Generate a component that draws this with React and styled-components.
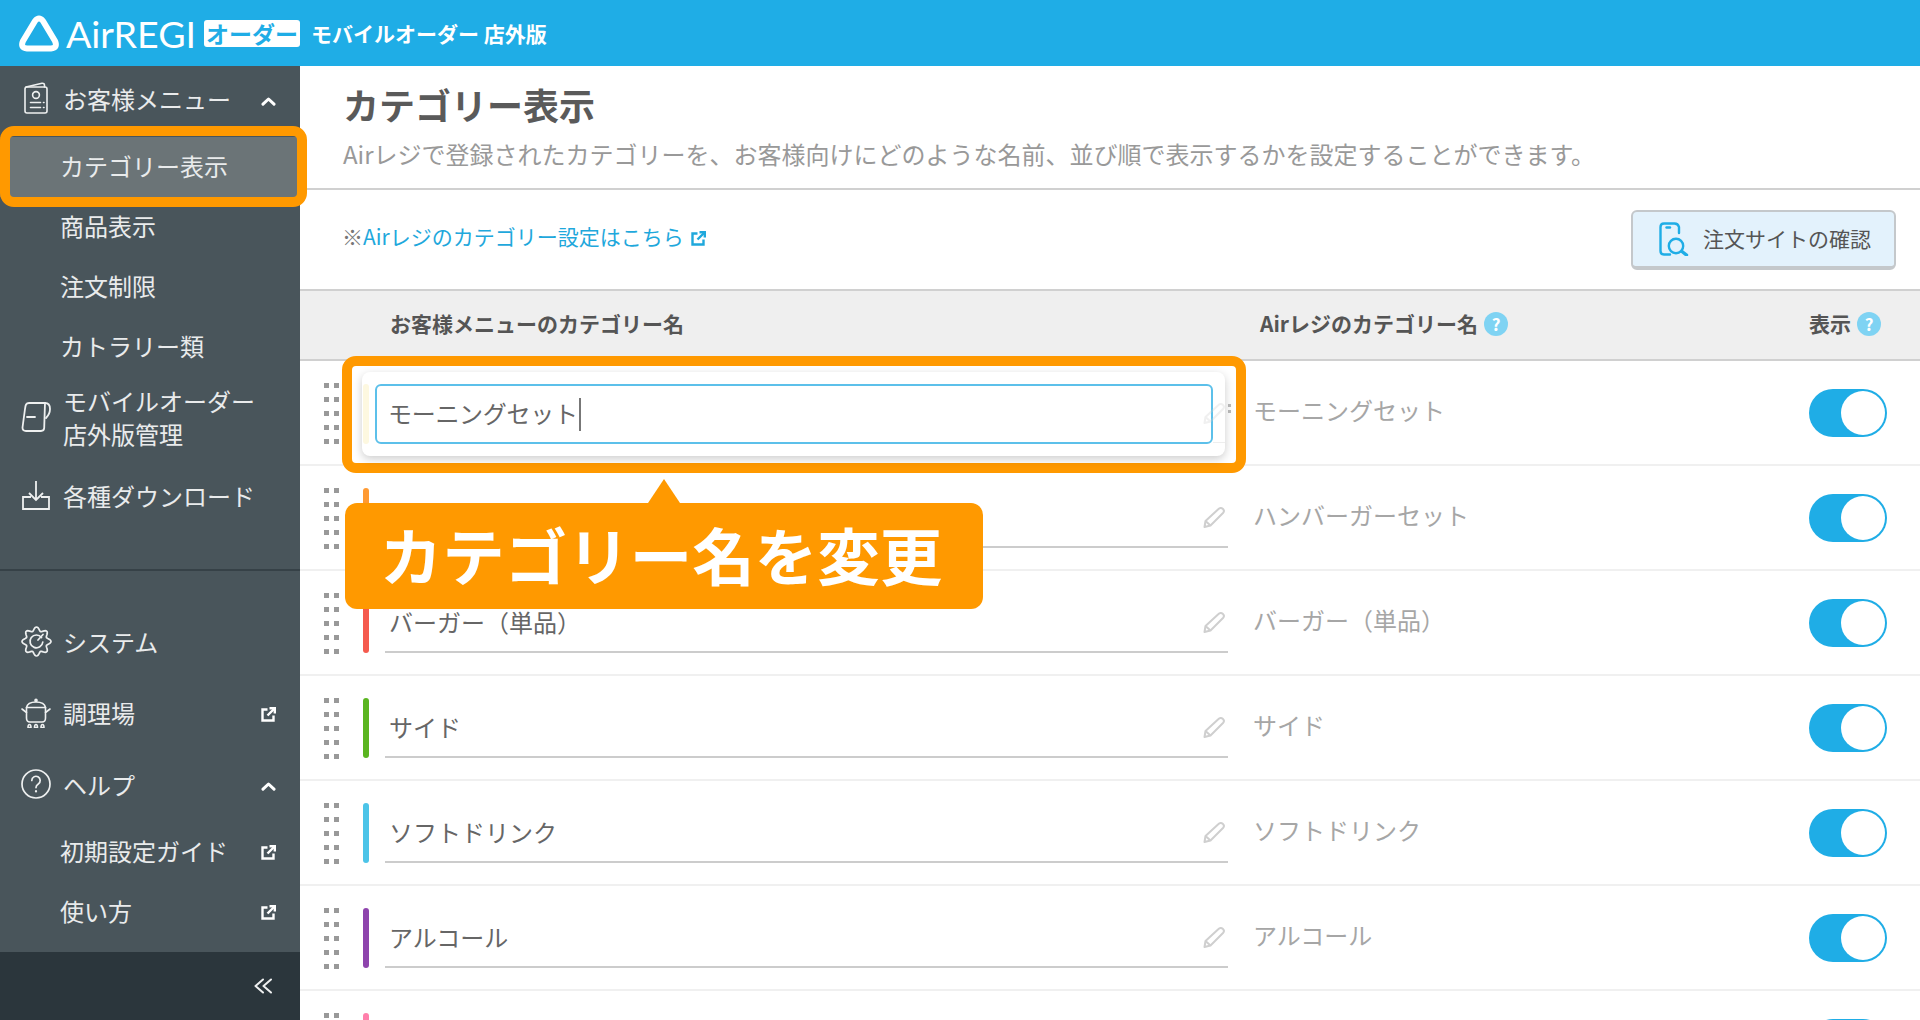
import React from 'react'
import styled, { createGlobalStyle } from 'styled-components'

const GlobalStyle = createGlobalStyle`
  html, body {
    margin: 0;
    padding: 0;
    background: #fff;
    font-family: "Noto Sans CJK JP", "Noto Sans", sans-serif;
  }
  * { box-sizing: border-box; }
`

const categories = [
  { id: 1, name: '', airName: 'モーニングセット', color: '#f8e65a' },
  { id: 2, name: '', airName: 'ハンバーガーセット', color: '#ff9a33' },
  { id: 3, name: 'バーガー（単品）', airName: 'バーガー（単品）', color: '#f55a4e' },
  { id: 4, name: 'サイド', airName: 'サイド', color: '#5ab520' },
  { id: 5, name: 'ソフトドリンク', airName: 'ソフトドリンク', color: '#4cc4e8' },
  { id: 6, name: 'アルコール', airName: 'アルコール', color: '#8e44ad' },
  { id: 7, name: '', airName: '', color: '#ff80ab' },
]

// 8 lobes, sampled round the circle
const gearPath = (() => {
  const pts = []
  for (let i = 0; i < 120; i++) {
    const a = (i / 120) * Math.PI * 2
    const r = 12.6 + 1.9 * Math.cos(a * 8)
    pts.push(`${(15.5 + r * Math.sin(a)).toFixed(2)} ${(15.5 - r * Math.cos(a)).toFixed(2)}`)
  }
  return 'M' + pts.join('L') + 'Z'
})()

const MenuIcon = () => (
  <svg width="24" height="32" viewBox="0 0 24 32" fill="none" stroke="#eef0f0" strokeWidth="1.6" strokeLinecap="round" strokeLinejoin="round">
    <path d="M2 5 18 1.2Q20.5 1 20.5 3.5V5" />
    <rect x="1" y="5" width="22" height="26" rx="2" />
    <circle cx="12" cy="13" r="3.4" />
    <path d="M6.5 20.5h10M6.5 25.5h10M19.5 20.5h.5M19.5 25.5h.5" />
  </svg>
)

const ScrollIcon = () => (
  <svg width="30" height="32" viewBox="0 0 30 32" fill="none" stroke="#eef0f0" strokeWidth="1.8" strokeLinecap="round" strokeLinejoin="round">
    <path d="M8 2C5 2 4.5 4 4 8L1.5 26.5Q1.5 30 5 30H20Q23 30 23.2 27L24 2H8" />
    <path d="M24 2Q29 2 29 8 29 13 25 17" />
    <path d="M6 16H14" />
  </svg>
)

const DownloadIcon = () => (
  <svg width="28" height="30" viewBox="0 0 28 30" fill="none" stroke="#eef0f0" strokeWidth="1.8">
    <path d="M14 1V20M7 13 14 20 21 13" />
    <path d="M9 17H1V29H27V17H19" />
  </svg>
)

const GearIcon = () => (
  <svg width="31" height="31" viewBox="0 0 31 31" fill="none" stroke="#eef0f0" strokeWidth="1.7" strokeLinecap="round">
    <path d={gearPath} />
    <path d="M20.5 11.5A6.4 6.4 0 1 0 21.8 16" />
    <path d="M17 14 22 8.5" />
  </svg>
)

const PotIcon = () => (
  <svg width="30" height="30" viewBox="0 0 30 30" fill="none" stroke="#eef0f0" strokeWidth="1.6" strokeLinecap="round" strokeLinejoin="round">
    <circle cx="15" cy="2.4" r="1" />
    <path d="M5.5 9.5Q6.5 4 15 4T24.5 9.5Z" />
    <path d="M1 11 5.5 14.5V20Q5.5 24 9 24H21Q24.5 24 24.5 20V14.5L29 11" />
    <path d="M5.5 9.5V14.5M24.5 9.5V14.5" />
    <path d="M7 29.5Q7 26.5 8.5 26.5T10 29.5ZM13.5 29.5Q13.5 26.5 15 26.5T16.5 29.5ZM20 29.5Q20 26.5 21.5 26.5T23 29.5Z" />
  </svg>
)

const HelpIcon = () => (
  <svg width="30" height="30" viewBox="0 0 30 30" fill="none" stroke="#eef0f0" strokeWidth="1.7" strokeLinecap="round">
    <circle cx="15" cy="15" r="14" />
    <path d="M10.8 11.5A4.2 4.2 0 1 1 17.3 15C15.8 16 15 16.8 15 18.6" />
    <path d="M15 22.2v.2" strokeWidth="2.2" />
  </svg>
)

const ChevronUp = () => (
  <svg width="15" height="9" viewBox="0 0 15 9" fill="none" stroke="#fff" strokeWidth="3" strokeLinecap="round" strokeLinejoin="round">
    <path d="M2 7.2 7.5 2 13 7.2" />
  </svg>
)

const ExternalIcon = ({ color = '#fff' }) => (
  <svg width="15" height="15" viewBox="0 0 15 15" fill="none" stroke={color} strokeWidth="2.4">
    <path d="M6.5 2.5H1.5V13.5H12.5V8.5" />
    <path d="M6.5 8.5 13 2" />
    <path d="M8.5 1.2H13.8V6.5" />
  </svg>
)

const DoubleChevron = () => (
  <svg width="18" height="16" viewBox="0 0 18 16" fill="none" stroke="#eef0f0" strokeWidth="2" strokeLinecap="round" strokeLinejoin="round">
    <path d="M9 1.5 1.5 8 9 14.5M17 1.5 9.5 8 17 14.5" />
  </svg>
)

const PhoneSearchIcon = () => (
  <svg width="30" height="34" viewBox="0 0 30 34" fill="none" stroke="#1fade6" strokeWidth="2.4" strokeLinecap="round">
    <path d="M11 32.5H5Q1.5 32.5 1.5 29V5Q1.5 1.5 5 1.5H15.5Q19 1.5 20 5V11" />
    <path d="M7.5 5.5h3.5" />
    <circle cx="17" cy="24" r="7.2" />
    <path d="M23 29.5 27.5 33" strokeWidth="3.4" />
  </svg>
)

const PencilIcon = () => (
  <svg width="22" height="22" viewBox="0 0 22 22" fill="none" stroke="#cfcfcf" strokeWidth="2" strokeLinejoin="round">
    <path d="M2.5 15 15.5 3a3 3 0 0 1 4.5 4L7.5 19.5 1.5 21Z" />
    <path d="M2.5 15 7.5 19.5" />
  </svg>
)

const LogoMark = () => (
  <svg width="42" height="37" viewBox="0 0 42 37" fill="none" stroke="#fff" strokeWidth="6" strokeLinejoin="round">
    <path d="M17 6Q21 1 25 6L37 26Q40 33 33 33.5H9Q2 33 5 26Z" />
  </svg>
)

const App = () => {
  return (
    <Page>
      <GlobalStyle />
      <Header>
        <LogoMark />
        <LogoText>AirREGI</LogoText>
        <LogoBadge>オーダー</LogoBadge>
        <ProductName>モバイルオーダー 店外版</ProductName>
      </Header>

      <Body>
        <Sidebar>
          <MenuTop>
            <Item $h={68}>
              <IconBox><MenuIcon /></IconBox>
              <ItemLabel>お客様メニュー</ItemLabel>
              <ItemEnd $nudge={2}><ChevronUp /></ItemEnd>
            </Item>
            <SubList>
              <SubItem $active><SubLabel>カテゴリー表示</SubLabel></SubItem>
              <SubItem><SubLabel>商品表示</SubLabel></SubItem>
              <SubItem><SubLabel>注文制限</SubLabel></SubItem>
              <SubItem><SubLabel>カトラリー類</SubLabel></SubItem>
            </SubList>
            <Item $h={83}>
              <IconBox><ScrollIcon /></IconBox>
              <ItemLabel>モバイルオーダー<br />店外版管理</ItemLabel>
            </Item>
            <Item $h={74}>
              <IconBox><DownloadIcon /></IconBox>
              <ItemLabel>各種ダウンロード</ItemLabel>
            </Item>
          </MenuTop>
          <MenuBottom>
            <Item $h={71}>
              <IconBox><GearIcon /></IconBox>
              <ItemLabel>システム</ItemLabel>
            </Item>
            <Item $h={71}>
              <IconBox><PotIcon /></IconBox>
              <ItemLabel>調理場</ItemLabel>
              <ItemEnd><ExternalIcon /></ItemEnd>
            </Item>
            <Item $h={72}>
              <IconBox><HelpIcon /></IconBox>
              <ItemLabel>ヘルプ</ItemLabel>
              <ItemEnd><ChevronUp /></ItemEnd>
            </Item>
            <SubItem><SubLabel>初期設定ガイド</SubLabel><ItemEnd><ExternalIcon /></ItemEnd></SubItem>
            <SubItem><SubLabel>使い方</SubLabel><ItemEnd><ExternalIcon /></ItemEnd></SubItem>
          </MenuBottom>
          <Collapse><DoubleChevron /></Collapse>
        </Sidebar>

        <Main>
          <TitleBlock>
            <Title>カテゴリー表示</Title>
            <Description>Airレジで登録されたカテゴリーを、お客様向けにどのような名前、並び順で表示するかを設定することができます。</Description>
          </TitleBlock>

          <Toolbar>
            <SettingLink>
              <LinkLabel><Mark>※</Mark>Airレジのカテゴリー設定はこちら</LinkLabel>
              <ExternalIcon color="#1fa8dc" />
            </SettingLink>
            <ConfirmButton>
              <PhoneSearchIcon />
              <ButtonLabel>注文サイトの確認</ButtonLabel>
            </ConfirmButton>
          </Toolbar>

          <TableHead>
            <HeadName>お客様メニューのカテゴリー名</HeadName>
            <HeadAir><HeadLabel>Airレジのカテゴリー名</HeadLabel><HelpDot>?</HelpDot></HeadAir>
            <HeadShow><HeadLabel>表示</HeadLabel><HelpDot>?</HelpDot></HeadShow>
          </TableHead>

          {categories.map((c) => (
            <Row key={c.id}>
              <Grip>{Array.from({ length: 10 }, (_, i) => <GripDot key={i} />)}</Grip>
              <ColorBar $color={c.color} />
              <NameField>
                <NameText>{c.name}</NameText>
                <PencilIcon />
              </NameField>
              <AirName>{c.airName}</AirName>
              <Toggle />
            </Row>
          ))}
        </Main>
      </Body>

      <SideRing />
      <FocusRing>
        <StrayDots />
        <FocusCard>
          <FadedBar />
          <InputBox>モーニングセット<Caret /></InputBox>
          <FadedPencil><PencilIcon /></FadedPencil>
          <FadedLine />
        </FocusCard>
      </FocusRing>
      <Callout>カテゴリー名を変更</Callout>
    </Page>
  )
}

export default App

const Page = styled.div`
  position: relative;
  width: 1920px;
  height: 1020px;
  overflow: hidden;
  display: flex;
  flex-direction: column;
`

const Header = styled.header`
  height: 66px;
  flex: none;
  background: #1fade6;
  display: flex;
  align-items: center;
  padding-left: 18px;
  color: #fff;
`

const LogoText = styled.span`
  font-family: "Lato", sans-serif;
  font-size: 37.5px;
  font-weight: 400;
  margin-left: 6px;
  width: 132px;
`

const LogoBadge = styled.span`
  width: 96px;
  height: 27px;
  margin-left: 6px;
  border-radius: 3px;
  background: #fff;
  color: #1fade6;
  font-size: 23px;
  font-weight: 700;
  line-height: 26px;
  text-align: center;
`

const ProductName = styled.span`
  margin-left: 11px;
  font-size: 21px;
  font-weight: 700;
`

const Body = styled.div`
  flex: 1;
  display: flex;
  min-height: 0;
`

const Sidebar = styled.aside`
  width: 300px;
  flex: none;
  background: #49555b;
  color: #e9ebec;
  display: flex;
  flex-direction: column;
`

const MenuTop = styled.nav`
  height: 505px;
  border-bottom: 2px solid #364147;
`

const MenuBottom = styled.nav`
  flex: 1;
  padding-top: 37px;
`

const Item = styled.div`
  height: ${(p) => p.$h}px;
  display: flex;
  align-items: center;
  padding-right: 24px;
  font-size: 24px;
`

const IconBox = styled.span`
  width: 36px;
  margin: 0 9px 4px 18px;
  display: flex;
  justify-content: center;
  flex: none;
`

const ItemLabel = styled.span`
  line-height: 33px;
  padding-bottom: 4px;
`

const ItemEnd = styled.span`
  margin-left: auto;
  margin-top: ${(p) => p.$nudge || 0}px;
  display: flex;
`

const SubList = styled.div`
  margin-top: 3px;
`

const SubItem = styled.div`
  height: 60px;
  display: flex;
  align-items: center;
  padding: 0 24px 0 60px;
  font-size: 24px;
  background: ${(p) => (p.$active ? '#6b7477' : 'transparent')};
`

const SubLabel = styled.span`
  padding-bottom: 4px;
`

const Collapse = styled.div`
  height: 68px;
  flex: none;
  background: #2b363c;
  display: flex;
  align-items: center;
  justify-content: flex-end;
  padding-right: 28px;
`

const Main = styled.main`
  flex: 1;
  min-width: 0;
  overflow: hidden;
`

const TitleBlock = styled.section`
  height: 124px;
  padding: 14px 0 0 43px;
  border-bottom: 2px solid #d0d0d0;
`

const Title = styled.h1`
  margin: 0;
  font-size: 36px;
  line-height: 48px;
  font-weight: 700;
  color: #5a5a5a;
`

const Description = styled.p`
  margin: 10px 0 0;
  font-size: 24px;
  line-height: 32px;
  color: #999;
`

const Toolbar = styled.div`
  height: 99px;
  display: flex;
  align-items: center;
  justify-content: space-between;
  padding: 0 24px 0 42px;
`

const SettingLink = styled.a`
  display: flex;
  align-items: center;
  gap: 7px;
  font-size: 21px;
  color: #1fa8dc;
  margin-top: -2px;
`

const LinkLabel = styled.span`
  padding-bottom: 5px;
`

const Mark = styled.span`
  color: #777;
`

const ConfirmButton = styled.button`
  width: 265px;
  height: 60px;
  display: flex;
  align-items: center;
  gap: 14px;
  padding: 0 0 0 26px;
  font: inherit;
  font-size: 21px;
  color: #555;
  background: #e3f2fc;
  border: 2px solid #c4c8cb;
  border-bottom-width: 4px;
  border-radius: 6px;
`

const ButtonLabel = styled.span`
  padding-bottom: 2px;
`

const TableHead = styled.div`
  height: 72px;
  padding-bottom: 3px;
  display: flex;
  align-items: center;
  background: #efefef;
  border-top: 2px solid #d0d0d0;
  border-bottom: 2px solid #d0d0d0;
  font-size: 21px;
  font-weight: 700;
  color: #555;
`

const HeadName = styled.span`
  width: 870px;
  margin-left: 90px;
  padding-bottom: 2px;
  flex: none;
`

const HeadLabel = styled.span`
  padding-bottom: 2px;
`

const HeadAir = styled.span`
  display: flex;
  align-items: center;
  gap: 6px;
  flex: 1;
`

const HeadShow = styled.span`
  display: flex;
  align-items: center;
  gap: 6px;
  margin-right: 39px;
`

const HelpDot = styled.span`
  width: 24px;
  height: 24px;
  border-radius: 50%;
  background: #7fd3f3;
  color: #fff;
  font-size: 17px;
  line-height: 24px;
  text-align: center;
`

const Row = styled.div`
  height: 105px;
  flex: none;
  display: flex;
  align-items: center;
  padding-left: 24px;
  border-bottom: 2px solid #f0f0f0;
`

const Grip = styled.div`
  width: 15px;
  margin: 2px 24px 0 0;
  display: grid;
  grid-template-columns: 5px 5px;
  justify-content: space-between;
  row-gap: 9px;
`

const GripDot = styled.i`
  display: block;
  width: 5px;
  height: 5px;
  background: #999;
`

const ColorBar = styled.div`
  width: 6px;
  height: 60px;
  border-radius: 3px;
  background: ${(p) => p.$color};
`

const NameField = styled.div`
  width: 843px;
  height: 60px;
  margin-left: 16px;
  padding: 0 3px 0 4px;
  display: flex;
  align-items: center;
  justify-content: space-between;
  border-bottom: 2px solid #ccc;
`

const NameText = styled.span`
  font-size: 24px;
  color: #666;
`

const AirName = styled.span`
  flex: 1;
  margin-left: 25px;
  padding-bottom: 7px;
  font-size: 24px;
  color: #a6a6a6;
`

const Toggle = styled.div`
  position: relative;
  width: 78px;
  height: 48px;
  margin-right: 33px;
  border-radius: 24px;
  background: #1fade6;

  &::after {
    content: "";
    position: absolute;
    top: 2px;
    right: 2px;
    width: 44px;
    height: 44px;
    border-radius: 50%;
    background: #fff;
  }
`

const SideRing = styled.div`
  position: absolute;
  left: 0;
  top: 126px;
  width: 307px;
  height: 81px;
  border: 10px solid #ff9900;
  border-radius: 14px;
`

const FocusRing = styled.div`
  position: absolute;
  left: 342px;
  top: 356px;
  width: 904px;
  height: 117px;
  border: 10px solid #ff9900;
  border-radius: 14px;
  background: #fff;
`

const StrayDots = styled.div`
  position: absolute;
  left: 876px;
  top: 38px;
  width: 3px;
  height: 9px;
  border-top: 3px solid #bbb;
  border-bottom: 3px solid #bbb;
`

const FocusCard = styled.div`
  position: absolute;
  left: 10px;
  top: 6px;
  width: 863px;
  height: 84px;
  padding-left: 1px;
  display: flex;
  align-items: center;
  gap: 6px;
  background: #fff;
  border-radius: 8px;
  box-shadow: 0 3px 10px rgba(0, 0, 0, 0.2);
`

const FadedBar = styled.div`
  width: 6px;
  height: 60px;
  border-radius: 3px;
  background: #fdf8e0;
`

const InputBox = styled.div`
  width: 838px;
  height: 60px;
  padding: 0 0 4px 11px;
  display: flex;
  align-items: center;
  font-size: 24px;
  letter-spacing: -0.3px;
  color: #666;
  background: #fff;
  border: 2px solid #5cc0ea;
  border-radius: 6px;
`

const Caret = styled.span`
  width: 2px;
  height: 33px;
  margin: 4px 0 0 1px;
  background: #777;
`

const FadedPencil = styled.div`
  position: absolute;
  left: 841px;
  top: 30px;
  opacity: 0.3;
`

const FadedLine = styled.div`
  position: absolute;
  left: 851px;
  right: 0;
  top: 70px;
  height: 1px;
  background: #eee;
`

const Callout = styled.div`
  position: absolute;
  left: 345px;
  top: 503px;
  width: 638px;
  height: 106px;
  padding: 0 6px 5px 0;
  display: flex;
  align-items: center;
  justify-content: center;
  background: #ff9900;
  border-radius: 12px;
  color: #fff;
  font-size: 62.5px;
  font-weight: 700;

  &::before {
    content: "";
    position: absolute;
    left: 303px;
    top: -24px;
    border-left: 16px solid transparent;
    border-right: 16px solid transparent;
    border-bottom: 24px solid #ff9900;
  }
`
